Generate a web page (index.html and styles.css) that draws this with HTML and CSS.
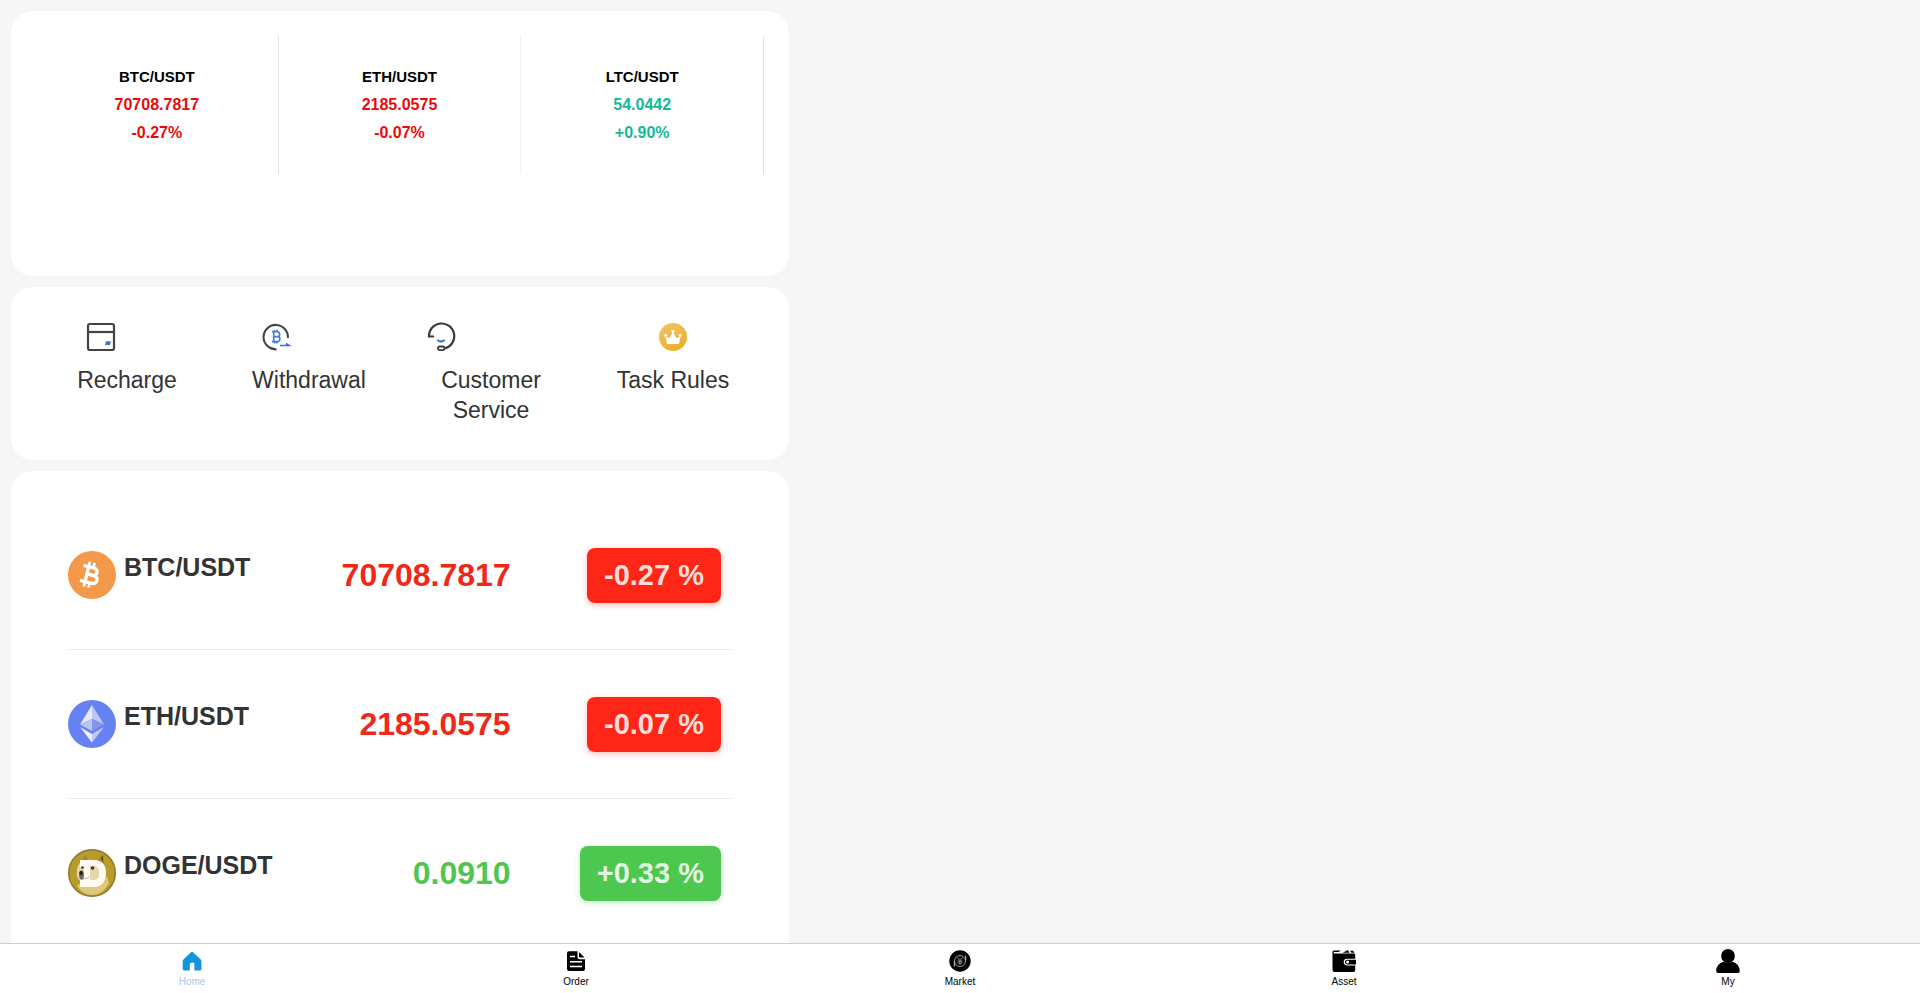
FILE: index.html
```html
<!DOCTYPE html>
<html lang="en">
<head>
<meta charset="utf-8">
<meta name="viewport" content="width=device-width, initial-scale=1">
<title>Home</title>
<link rel="stylesheet" href="styles.css">
</head>
<body>
<div class="app">
  <main class="content">
    <section class="card ticker">
      <div class="ticker-item">
        <span class="ticker-name">BTC/USDT</span>
        <span class="ticker-value down">70708.7817</span>
        <span class="ticker-value down">-0.27%</span>
      </div>
      <div class="ticker-item faint">
        <span class="ticker-name">ETH/USDT</span>
        <span class="ticker-value down">2185.0575</span>
        <span class="ticker-value down">-0.07%</span>
      </div>
      <div class="ticker-item">
        <span class="ticker-name">LTC/USDT</span>
        <span class="ticker-value up">54.0442</span>
        <span class="ticker-value up">+0.90%</span>
      </div>
    </section>

    <section class="card shortcuts">
      <a class="shortcut" href="#recharge">
        <span class="shortcut-body">
          <svg class="shortcut-icon" viewBox="0 0 48 48" aria-hidden="true">
            <rect x="11" y="11" width="26" height="26" rx="2" fill="none" stroke="#444" stroke-width="2.200"/>
            <path d="M11 19h26" stroke="#444" stroke-width="2.200"/>
            <path d="M29 28.200h4.800l-.8 3.800h-5z" fill="#3a70e2"/>
          </svg>
          <span class="shortcut-label">Recharge</span>
        </span>
      </a>
      <a class="shortcut" href="#withdrawal">
        <span class="shortcut-body">
          <svg class="shortcut-icon" viewBox="0 0 48 48" aria-hidden="true">
            <path d="M24.500 36.300A12.200 12.200 0 1 1 35.900 25" fill="none" stroke="#444" stroke-width="2.100"/>
            <path d="M20 18.700h5.200a2.400 2.400 0 0 1 0 4.900h-3.400M25.400 23.600a2.500 2.500 0 0 1 0 5H20M21.700 18.700v9.900M22.500 16.700v2M25 16.700v2M22.500 28.600v2M25 28.600v2" fill="none" stroke="#3f79ea" stroke-width="1.600"/>
            <path d="M28 32.500h9l-3-2" fill="none" stroke="#3a70e2" stroke-width="1.700"/>
          </svg>
          <span class="shortcut-label">Withdrawal</span>
        </span>
      </a>
      <a class="shortcut" href="#service">
        <span class="shortcut-body">
          <svg class="shortcut-icon" viewBox="0 0 48 48" aria-hidden="true">
            <path d="M14 23.500H8.900A12.700 12.700 0 1 1 25 35.400" fill="none" stroke="#3b3b3f" stroke-width="2.100"/>
            <rect x="18" y="33.500" width="6.500" height="3.600" rx="1.800" fill="none" stroke="#3b3b3f" stroke-width="1.800"/>
            <path d="M17.300 27q3.700 3 7.400 0" fill="none" stroke="#3a70e2" stroke-width="2.200"/>
          </svg>
          <span class="shortcut-label">Customer Service</span>
        </span>
      </a>
      <a class="shortcut" href="#rules">
        <span class="shortcut-body centered">
          <svg class="shortcut-icon" viewBox="0 0 48 48" aria-hidden="true">
            <defs><linearGradient id="gold" x1="0" y1="0" x2="0.600" y2="1"><stop offset="0" stop-color="#f1c768"/><stop offset="1" stop-color="#edae2b"/></linearGradient></defs>
            <circle cx="24" cy="24" r="14" fill="url(#gold)"/>
            <path d="M18 31l-1.500-7.500 4.200 1.600L23.300 20h1.400l2.600 5.100 4.200-1.600L30 31z" fill="#fff"/>
            <circle cx="24" cy="18.500" r="1.600" fill="#fff"/>
            <circle cx="16.800" cy="22.300" r="1.500" fill="#fff"/>
            <circle cx="31.200" cy="22.300" r="1.500" fill="#fff"/>
          </svg>
          <span class="shortcut-label">Task Rules</span>
        </span>
      </a>
    </section>

    <section class="card market">
      <div class="market-row">
        <div class="coin">
          <svg class="coin-icon" viewBox="0 0 48 48" aria-hidden="true">
            <circle cx="24" cy="24" r="24" fill="#f2994a"/>
            <g transform="rotate(14 23 24)" fill="none" stroke="#fff">
              <path d="M13.500 16.500h11a3.700 3.700 0 0 1 0 7.400h-4.500M24.500 23.900h1.500a4 4 0 0 1 0 8H13.500M18.800 16.500v15.400" stroke-width="3.400"/>
              <path d="M18.800 11.300v5M23.600 11.300v5M18.800 32v5M23.600 32v5" stroke-width="2.600"/>
            </g>
          </svg>
          <span class="coin-name">BTC/USDT</span>
        </div>
        <span class="price falling">70708.7817</span>
        <span class="change"><span class="badge falling-bg">-0.27 %</span></span>
      </div>
      <div class="market-row">
        <div class="coin">
          <svg class="coin-icon" viewBox="0 0 48 48" aria-hidden="true">
            <circle cx="24" cy="24" r="24" fill="#6681f2"/>
            <path d="M24 5L12 24.500l12-5.500z" fill="#e6eafc"/>
            <path d="M24 5l12 19.500L24 19z" fill="#bcc7f7"/>
            <path d="M12 24.500L24 19v12z" fill="#b8c5f5"/>
            <path d="M36 24.500L24 19v12z" fill="#8496e8"/>
            <path d="M12 27l12 7v8.500z" fill="#f0f2fd"/>
            <path d="M36 27l-12 7v8.500z" fill="#c0caf7"/>
          </svg>
          <span class="coin-name">ETH/USDT</span>
        </div>
        <span class="price falling">2185.0575</span>
        <span class="change"><span class="badge falling-bg">-0.07 %</span></span>
      </div>
      <div class="market-row">
        <div class="coin">
          <svg class="coin-icon" viewBox="0 0 48 48" aria-hidden="true">
            <circle cx="24" cy="24" r="23.300" fill="#b99b2c" stroke="#8a762b" stroke-width="1.400"/>
            <path d="M9 37c5-5 8-2 12-3 8 1 14-1 18-7l2 7c-4 8-10 12-17 12-6 0-11-3-15-9z" fill="#dfc87a"/>
            <path d="M14 11l3-5 3 5zM30 11l5-6 1 10z" fill="#a58035"/>
            <path d="M33 9l2-2v6z" fill="#57401d"/>
            <path d="M12 14c5-4 14-4 19-1 5 5 6 13 3 19-5 5-14 4-20 1-4-2-6-6-5-11 0-4 1-6 3-8z" fill="#e6d6a8"/>
            <path fill-rule="evenodd" d="M12 11h14c8 0 12 5 12 13s-4 14-12 14H12v-7h4V18h-4zM22 17v14h3c4 0 6-2 6-7s-2-7-6-7z" fill="#fffaf0"/>
            <path d="M22 17h3c4 0 6 2 6 7s-2 7-6 7h-3z" fill="#e5d7ad"/>
            <ellipse cx="13.500" cy="26" rx="2.400" ry="4.500" fill="#6d6755"/>
            <ellipse cx="13" cy="24" rx="1.700" ry="2" fill="#18191a"/>
            <circle cx="24.500" cy="19" r="1.800" fill="#40371f"/>
            <circle cx="14.500" cy="18.500" r="1.200" fill="#40371f"/>
            <path d="M15 29q4 2 6-1" fill="none" stroke="#c7a9a0"/>
          </svg>
          <span class="coin-name">DOGE/USDT</span>
        </div>
        <span class="price rising">0.0910</span>
        <span class="change"><span class="badge rising-bg">+0.33 %</span></span>
      </div>
    </section>
  </main>

  <nav class="tabbar">
    <a class="tab active" href="#home">
      <svg class="tab-icon" viewBox="0 0 24 24" aria-hidden="true"><path d="M11 3.300a1.500 1.500 0 0 1 2 0l7.500 7q.9.800.9 2V20q0 1.500-1.500 1.500h-5.500V15q0-1.500-1.500-1.500h-.4Q9.800 13.500 9.800 15v6.500H4.200Q2.700 21.500 2.700 20v-7.700q0-1.200.9-2z" fill="#1296db"/></svg>
      <span>Home</span>
    </a>
    <a class="tab" href="#order">
      <svg class="tab-icon" viewBox="0 0 24 24" aria-hidden="true"><path d="M5 2.300h8.500v6.200q0 1.700 1.700 1.700h5.800V20q0 2-2 2H5q-2 0-2-2V4.300q0-2 2-2zM15 3l5.500 5.500H16q-1 0-1-1z"/><path d="M6 7.500h5M6 12.700h12M6 17.500h12" stroke="#fff" stroke-width="1.500"/></svg>
      <span>Order</span>
    </a>
    <a class="tab" href="#market">
      <svg class="tab-icon" viewBox="0 0 24 24" aria-hidden="true"><circle cx="12" cy="12" r="10.700"/><circle cx="12" cy="12" r="5.500" fill="none" stroke="#aaa" stroke-width=".9"/><path d="M6.300 17.500v-5M17.700 6.500v5" fill="none" stroke="#ccc"/><path d="M9.500 8.500l2.500 3 2.500-3M9.500 12h5M9.500 14h5M12 11.500V16" fill="none" stroke="#999"/></svg>
      <span>Market</span>
    </a>
    <a class="tab" href="#asset">
      <svg class="tab-icon" viewBox="0 0 24 24" aria-hidden="true"><path d="M1.500 4.500h20.700q1 0 1 1v4.300H15a3.300 3.300 0 0 0 0 6.600h8.200V21q0 2-2 2H2.500Q.5 23 .5 21V3q0-1.500 1.500-1.500h7L6.500 3H2zM10.500 3.700L16 1l1.500 2.700zM18 1.700h3l1.500 2h-3z"/><path d="M15.200 10.800H24v4.600h-8.800a2.300 2.300 0 0 1 0-4.600z"/><circle cx="15.600" cy="13.100" r="1.500" fill="#fff"/></svg>
      <span>Asset</span>
    </a>
    <a class="tab" href="#my">
      <svg class="tab-icon" viewBox="0 0 24 24" aria-hidden="true"><circle cx="12" cy="7" r="6.900"/><path d="M8 12.600q4 2.500 8 0c5 1.500 7.800 5 7.800 9.400q0 2-2 2H2.200q-2 0-2-2c0-4.400 2.800-7.900 7.800-9.400z"/></svg>
      <span>My</span>
    </a>
  </nav>
</div>
</body>
</html>
```
FILE: styles.css
```css
* {
  box-sizing: border-box;
}

body {
  margin: 0;
  background: #f6f6f6;
  color: #333;
  font-family: "Liberation Sans", Arial, sans-serif;
}

a {
  color: inherit;
  text-decoration: none;
}

.app {
  display: flex;
  flex-direction: column;
  height: 100vh;
}

.content {
  flex: 1;
  min-height: 0;
  overflow-y: auto;
  scrollbar-width: none;
  display: flex;
  flex-direction: column;
  gap: 11px;
  width: 100%;
  max-width: 800px;
  padding: 11px;
}

.card {
  flex: none;
  background: #fff;
  border-radius: 22px;
}

/* Ticker */

.ticker {
  display: grid;
  grid-template-columns: repeat(3, 1fr);
  align-items: start;
  min-height: 265px;
  padding: 25px;
}

.ticker-item {
  display: flex;
  flex-direction: column;
  align-items: center;
  padding: 27px 0;
  border-right: 1px solid #e2e2e2;
  font-weight: bold;
  line-height: 28px;
}

.ticker-item.faint {
  border-right-color: #f1f1f1;
}

.ticker-name {
  color: #000;
  font-size: 15px;
}

.ticker-value {
  font-size: 16px;
}

.up {
  color: #13b999;
}

.down {
  color: #ea0b0b;
}

/* Shortcuts */

.shortcuts {
  display: grid;
  grid-template-columns: repeat(4, 1fr);
  padding: 26px 25px 35px;
}

.shortcut {
  display: flex;
  justify-content: center;
  padding: 0 20px;
}

.shortcut-body {
  display: flex;
  flex-direction: column;
  gap: 4px;
}

.shortcut-body.centered {
  align-items: center;
}

.shortcut-icon {
  width: 48px;
  height: 48px;
}

.shortcut-label {
  font-size: 23px;
  line-height: 30px;
  text-align: center;
}

/* Market list */

.market {
  padding: 30px 57px;
}

.market-row {
  display: grid;
  grid-template-columns: repeat(3, 1fr);
  align-items: center;
  height: 149px;
  border-bottom: 1px solid #ececec;
}

.coin {
  display: flex;
  align-items: center;
  gap: 8px;
}

.coin-icon {
  flex: none;
  width: 48px;
  height: 48px;
}

.coin-name {
  padding-bottom: 16px;
  font-size: 25px;
  font-weight: bold;
  line-height: 30px;
}

.price {
  font-size: 32px;
  font-weight: bold;
  text-align: right;
}

.falling {
  color: #f0281a;
}

.rising {
  color: #4ec654;
}

.change {
  display: flex;
  justify-content: flex-end;
  padding-right: 11px;
}

.badge {
  padding: 11px 17px;
  border-radius: 8px;
  color: rgba(255, 255, 255, 0.85);
  font-size: 29px;
  font-weight: bold;
  line-height: 33px;
}

.falling-bg {
  background: #ff2617;
  box-shadow: 0 2px 6px rgba(255, 38, 23, 0.3);
}

.rising-bg {
  background: #4dc74f;
  box-shadow: 0 2px 6px rgba(77, 199, 79, 0.3);
}

/* Bottom navigation */

.tabbar {
  flex: none;
  display: grid;
  grid-template-columns: repeat(5, 1fr);
  height: 50px;
  border-top: 1px solid #d0d0d0;
  background: #fff;
}

.tab {
  display: flex;
  flex-direction: column;
  align-items: center;
  padding-top: 5px;
  color: #000;
  font-size: 10px;
  line-height: 17px;
}

.tab.active {
  color: #a6c8f0;
}

.tab-icon {
  width: 24px;
  height: 24px;
}
```
